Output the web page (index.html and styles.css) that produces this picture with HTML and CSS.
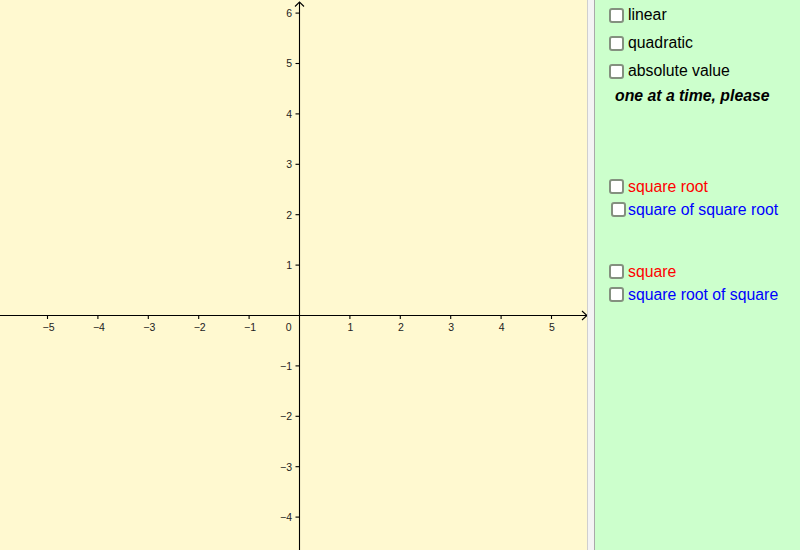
FILE: index.html
```html
<!DOCTYPE html>
<html>
<head>
<meta charset="utf-8">
<link rel="stylesheet" href="styles.css">
</head>
<body>
<div class="app">
  <div class="graph">
    <svg class="plot" width="587" height="550" viewBox="0 0 587 550">
      <g class="axes">
        <line x1="0" y1="315.5" x2="587" y2="315.5"/>
        <line x1="299.5" y1="2" x2="299.5" y2="550"/>
        <polyline class="arrow" points="582,311 587,315.5 582,320"/>
        <polyline class="arrow" points="295,6.5 299.5,2 304,6.5"/>
        <!-- x ticks -->
        <line x1="47.5" y1="315.5" x2="47.5" y2="319"/>
        <line x1="97.9" y1="315.5" x2="97.9" y2="319"/>
        <line x1="148.3" y1="315.5" x2="148.3" y2="319"/>
        <line x1="198.7" y1="315.5" x2="198.7" y2="319"/>
        <line x1="249.1" y1="315.5" x2="249.1" y2="319"/>
        <line x1="349.9" y1="315.5" x2="349.9" y2="319"/>
        <line x1="400.3" y1="315.5" x2="400.3" y2="319"/>
        <line x1="450.7" y1="315.5" x2="450.7" y2="319"/>
        <line x1="501.1" y1="315.5" x2="501.1" y2="319"/>
        <line x1="551.5" y1="315.5" x2="551.5" y2="319"/>
        <!-- y ticks -->
        <line x1="295.5" y1="13.1" x2="299.5" y2="13.1"/>
        <line x1="295.5" y1="63.5" x2="299.5" y2="63.5"/>
        <line x1="295.5" y1="113.9" x2="299.5" y2="113.9"/>
        <line x1="295.5" y1="164.3" x2="299.5" y2="164.3"/>
        <line x1="295.5" y1="214.7" x2="299.5" y2="214.7"/>
        <line x1="295.5" y1="265.1" x2="299.5" y2="265.1"/>
        <line x1="295.5" y1="365.9" x2="299.5" y2="365.9"/>
        <line x1="295.5" y1="416.3" x2="299.5" y2="416.3"/>
        <line x1="295.5" y1="466.7" x2="299.5" y2="466.7"/>
        <line x1="295.5" y1="517.1" x2="299.5" y2="517.1"/>
      </g>
      <g class="xlabels">
        <text x="48.5" y="330.5">−5</text>
        <text x="98.9" y="330.5">−4</text>
        <text x="149.3" y="330.5">−3</text>
        <text x="199.7" y="330.5">−2</text>
        <text x="250.1" y="330.5">−1</text>
        <text x="350.4" y="330.5">1</text>
        <text x="400.8" y="330.5">2</text>
        <text x="451.2" y="330.5">3</text>
        <text x="501.6" y="330.5">4</text>
        <text x="552" y="330.5">5</text>
      </g>
      <g class="ylabels">
        <text x="291.5" y="330.5">0</text>
        <text x="292" y="16.9">6</text>
        <text x="292" y="67.3">5</text>
        <text x="292" y="117.7">4</text>
        <text x="292" y="168.1">3</text>
        <text x="292" y="218.5">2</text>
        <text x="292" y="268.9">1</text>
        <text x="292" y="369.7">−1</text>
        <text x="292" y="420.1">−2</text>
        <text x="292" y="470.5">−3</text>
        <text x="292" y="520.9">−4</text>
      </g>
    </svg>
  </div>
  <div class="divider"></div>
  <div class="panel">
    <div class="group group-main">
      <label class="row row-tall"><span class="box"></span><span class="txt">linear</span></label>
      <label class="row row-tall"><span class="box"></span><span class="txt">quadratic</span></label>
      <label class="row row-tall"><span class="box"></span><span class="txt">absolute value</span></label>
      <div class="note">one at a time, please</div>
    </div>
    <div class="group group-root">
      <label class="row"><span class="box"></span><span class="txt red">square root</span></label>
      <label class="row row-shift"><span class="box"></span><span class="txt blue">square of square root</span></label>
    </div>
    <div class="group group-square">
      <label class="row"><span class="box"></span><span class="txt red">square</span></label>
      <label class="row"><span class="box"></span><span class="txt blue">square root of square</span></label>
    </div>
  </div>
</div>
</body>
</html>
```

FILE: styles.css
```css
html, body {
  margin: 0;
  padding: 0;
}
body {
  width: 800px;
  height: 550px;
  overflow: hidden;
  font-family: "Liberation Sans", Arial, sans-serif;
}
.app {
  display: flex;
  width: 800px;
  height: 550px;
}
.graph {
  width: 587px;
  height: 550px;
  background: #fff9d0;
  flex: none;
}
.plot {
  display: block;
}
.axes line,
.axes polyline {
  stroke: #000;
  stroke-width: 1.1;
  fill: none;
}
.xlabels text,
.ylabels text {
  font-family: "Liberation Sans", Arial, sans-serif;
  font-size: 10.5px;
  fill: #222;
}
.xlabels text {
  text-anchor: middle;
}
.ylabels text {
  text-anchor: end;
}
.divider {
  width: 6px;
  flex: none;
  background: #f4f4f4;
  border-left: 1px solid #cfcfcf;
  border-right: 1px solid #a9a9a9;
}
.panel {
  flex: 1;
  background: #ccffcc;
  display: flex;
  flex-direction: column;
  padding: 1px 0 0 14px;
  font-size: 15.8px;
  color: #000;
}
.group {
  display: flex;
  flex-direction: column;
}
.group-root {
  margin-top: 69px;
}
.group-square {
  margin-top: 39px;
}
.row {
  display: flex;
  align-items: center;
  height: 23px;
}
.row-tall {
  height: 28px;
}
.box {
  width: 11px;
  height: 11px;
  border: 2px solid #84907f;
  border-radius: 3px;
  background: #fff;
  flex: none;
  margin-right: 4px;
}
.row-shift .box {
  margin-left: 2px;
  margin-right: 2px;
}
.txt {
  line-height: 20px;
}
.red {
  color: #ff0000;
}
.blue {
  color: #0000ff;
}
.note {
  height: 21px;
  line-height: 21px;
  padding-left: 6px;
  font-weight: bold;
  font-style: italic;
}
```
